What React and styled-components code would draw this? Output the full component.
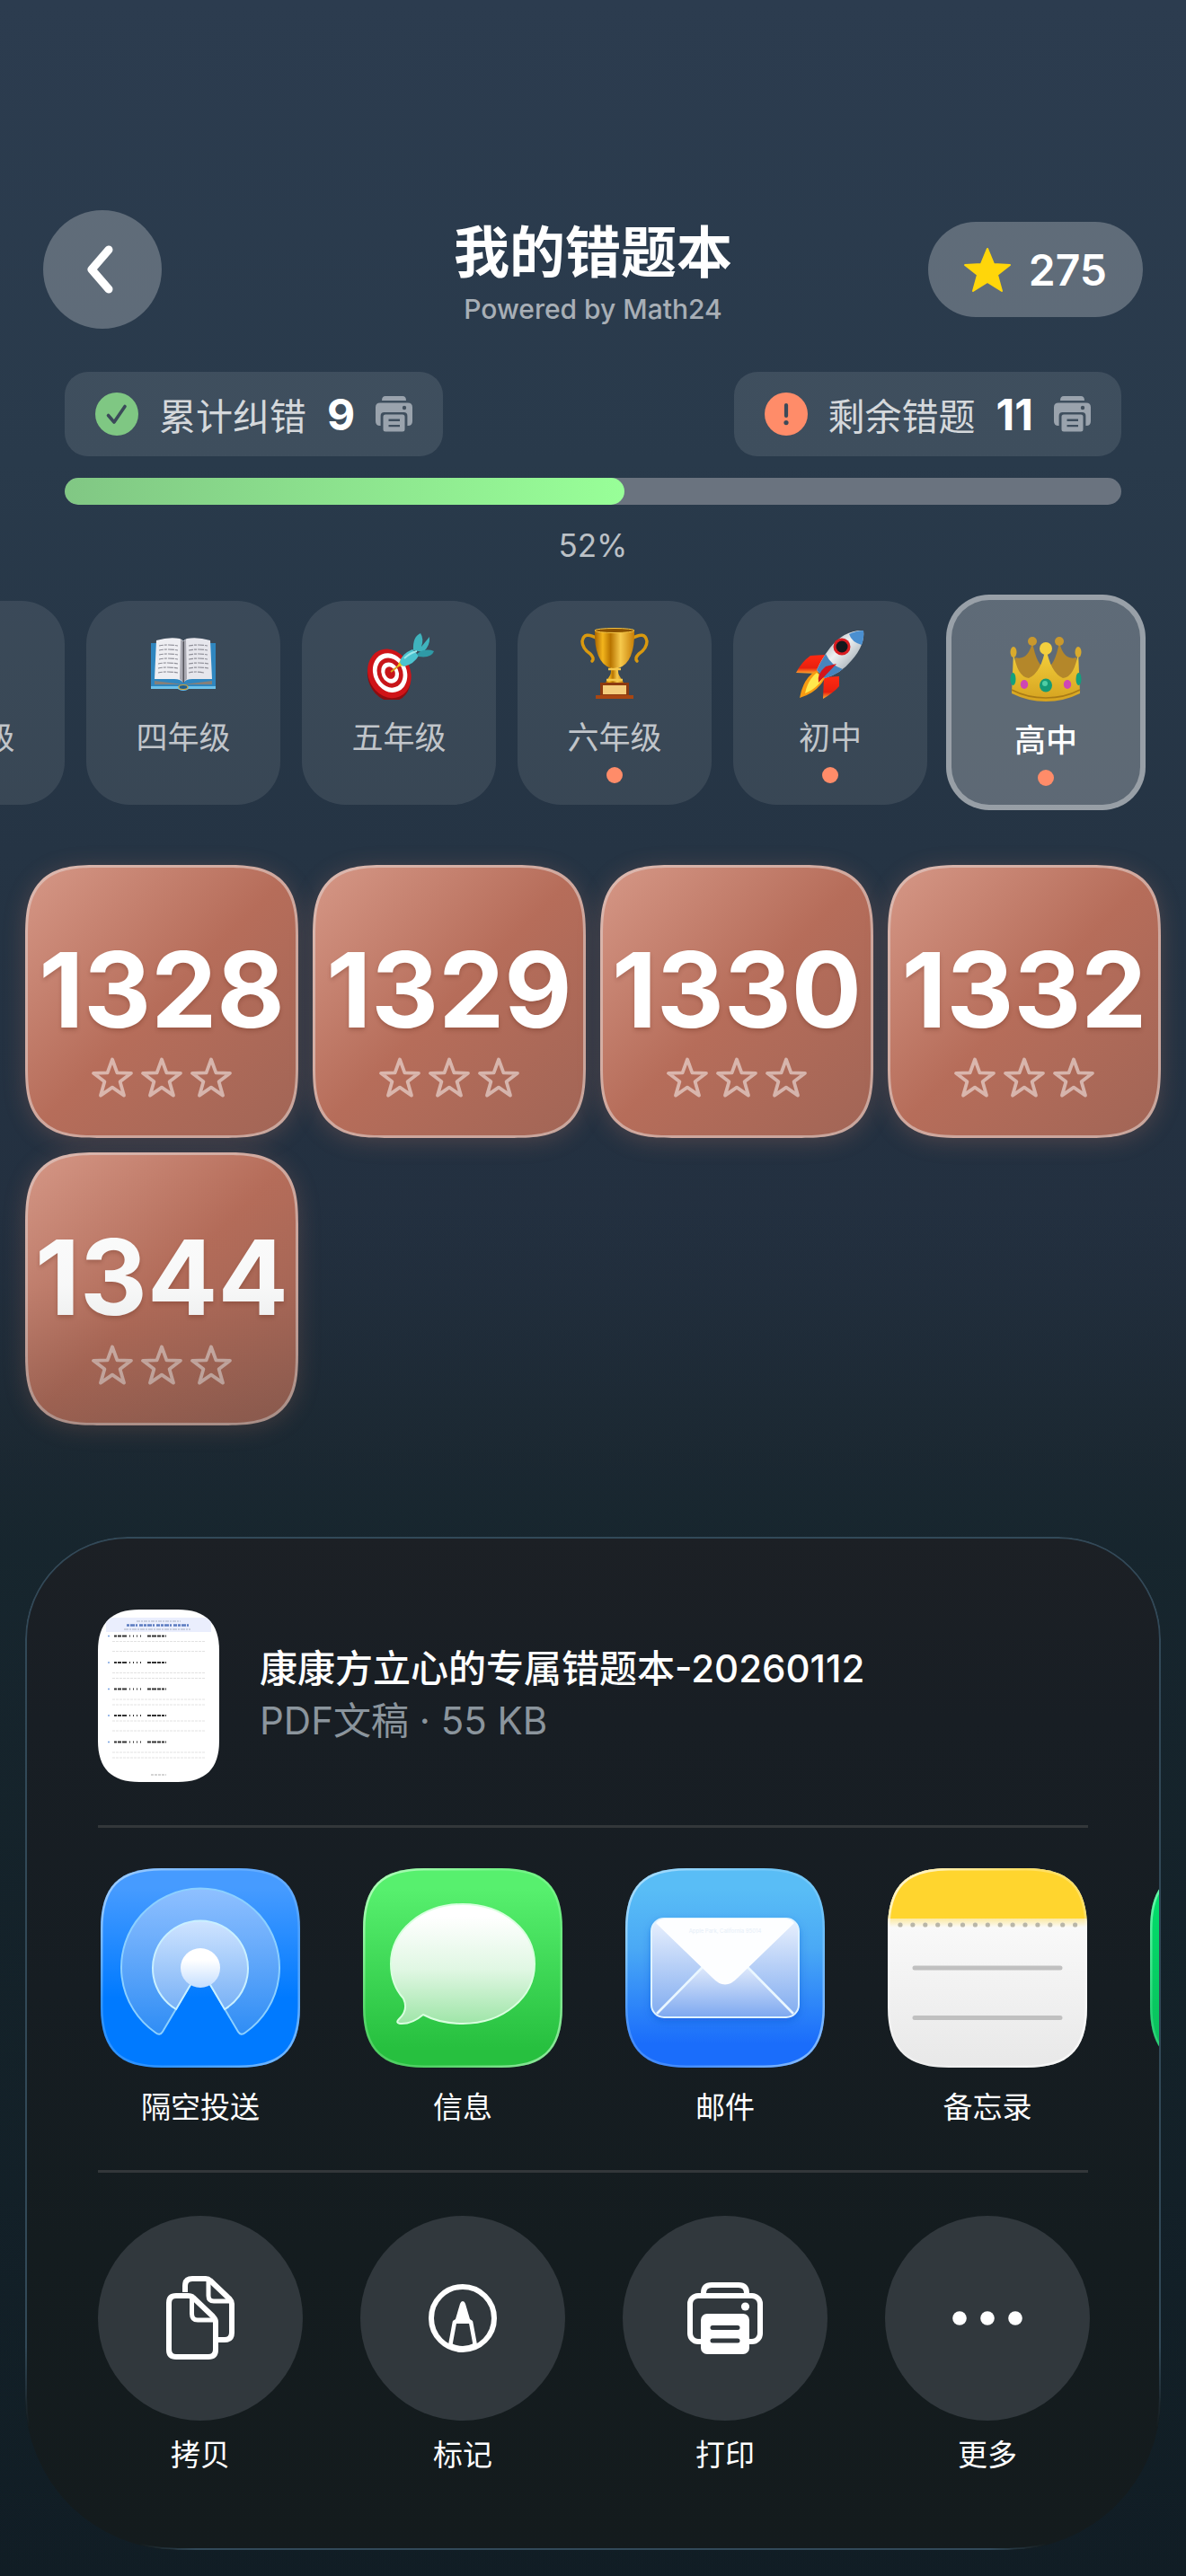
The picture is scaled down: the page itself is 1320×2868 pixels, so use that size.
import React from "react";
import styled, { createGlobalStyle, css } from "styled-components";

const GlobalStyle = createGlobalStyle`
  *, *::before, *::after { box-sizing: border-box; }
  body {
    margin: 0;
    background: #111d25;
    font-family: Inter, "Noto Sans CJK SC", sans-serif;
    color: #fff;
  }
  button {
    margin: 0;
    padding: 0;
    border: 0;
    background: none;
    color: inherit;
    font: inherit;
    cursor: pointer;
  }
  h1, h2, p { margin: 0; }
  svg { display: block; flex: none; }
`;

const Page = styled.div`
  min-height: 100vh;
  display: flex;
  flex-direction: column;
  overflow: hidden;
  background: linear-gradient(
    to bottom,
    #2c3c4f 0%,
    #293a4b 18%,
    #253444 33%,
    #233040 47%,
    #1f2b37 56%,
    #1b2934 60%,
    #17242e 74%,
    #121d27 100%
  );
`;

const Header = styled.header`
  display: grid;
  grid-template-columns: 1fr auto 1fr;
  align-items: center;
  padding: 234px 48px 0;
`;

const BackButton = styled.button`
  width: 132px;
  height: 132px;
  border-radius: 50%;
  display: grid;
  place-items: center;
  background: rgba(255, 255, 255, 0.25);
`;

const Heading = styled.div`
  padding-top: 4px;
  text-align: center;
`;

const Title = styled.h1`
  font-size: 62px;
  line-height: 80px;
  font-weight: 700;
`;

const Tagline = styled.p`
  margin-top: 4px;
  font-size: 30px;
  line-height: 36px;
  font-weight: 500;
  color: rgba(255, 255, 255, 0.6);
`;

const Score = styled.div`
  justify-self: end;
  display: flex;
  align-items: center;
  gap: 20px;
  height: 106px;
  padding: 0 40px;
  border-radius: 53px;
  background: rgba(255, 255, 255, 0.25);
  font-size: 48px;
  font-weight: 600;
`;

const Stats = styled.section`
  display: flex;
  justify-content: space-between;
  padding: 48px 72px 24px;
`;

const StatChip = styled.button`
  display: flex;
  align-items: center;
  gap: 23px;
  height: 94px;
  padding: 0 34px;
  border-radius: 26px;
  background: rgba(255, 255, 255, 0.1);
`;

const StatLabel = styled.span`
  font-size: 41px;
  color: rgba(255, 255, 255, 0.8);
`;

const StatValue = styled.span`
  font-size: 48px;
  font-weight: 700;
`;

const Track = styled.div`
  height: 30px;
  margin: 0 72px;
  border-radius: 15px;
  background: #6a737f;
  overflow: hidden;
`;

const Fill = styled.div`
  height: 100%;
  border-radius: 15px;
  background: linear-gradient(to right, #81c784, #98ff98);
`;

const Percent = styled.p`
  margin: 22px 0 32px;
  font-size: 35px;
  line-height: 46px;
  text-align: center;
  color: rgba(255, 255, 255, 0.7);
`;

const Tabs = styled.nav`
  display: flex;
  justify-content: flex-end;
  align-items: center;
  gap: 24px;
  padding-right: 48px;
  overflow: hidden;
`;

const Tab = styled.button`
  flex: 0 0 216px;
  height: 227px;
  display: flex;
  flex-direction: column;
  align-items: center;
  padding-top: 30px;
  border-radius: 48px;
  background: rgba(255, 255, 255, 0.09);
  color: rgba(255, 255, 255, 0.7);
  font-size: 35px;
  line-height: 44px;
  ${(p) =>
    p.$active &&
    css`
      flex-basis: 222px;
      height: 240px;
      margin: 0 -3px;
      padding-top: 34px;
      border: 6px solid rgba(255, 255, 255, 0.36);
      background: rgba(255, 255, 255, 0.26);
      color: #fff;
      font-weight: 500;
    `}
`;

const TabLabel = styled.span`
  margin: 20px 0 11px;
`;

const Dot = styled.span`
  width: 18px;
  height: 18px;
  border-radius: 50%;
  background: #ff8c69;
`;

const Grid = styled.main`
  display: grid;
  grid-template-columns: repeat(4, 1fr);
  gap: 16px;
  padding: 61px 28px 0;
`;

const Card = styled.button`
  aspect-ratio: 1;
  min-width: 0;
  display: flex;
  flex-direction: column;
  align-items: center;
  gap: 16px;
  padding-top: 78px;
  border: 3px solid rgba(225, 205, 200, 0.62);
  border-radius: 66px;
  background: linear-gradient(135deg, #d69887 0%, #b66d5a 50%, #a16556 100%) border-box;
  box-shadow: 0 4px 26px rgba(214, 128, 106, 0.24);

  @supports (corner-shape: superellipse(1.5)) {
    border-radius: 80px;
    corner-shape: superellipse(1.5);
  }
`;

const CardNumber = styled.span`
  font-size: 116px;
  line-height: 116px;
  font-weight: 700;
  text-shadow: 0 3px 4px rgba(90, 35, 20, 0.25);
`;

const StarRow = styled.span`
  display: flex;
  gap: 7px;
`;

const SheetLayer = styled.div`
  position: relative;
  z-index: 1;
  margin-top: auto;
  display: flex;
  flex-direction: column;
`;

const Sheet = styled.section`
  position: relative;
  margin: 0 28px 29px;
  padding: 81px 81px 84px;
  border-radius: 114px 114px 170px 170px;
  background: linear-gradient(to bottom, #1c2025 0%, #181e24 18%, #161d22 45%, #141c1f 70%, #141b1d 100%);

  &::before {
    content: "";
    position: absolute;
    inset: -440px -28px -29px;
    z-index: -1;
    pointer-events: none;
    background: linear-gradient(
      to bottom,
      rgba(14, 30, 32, 0) 0,
      rgba(14, 30, 32, 0.03) 160px,
      rgba(14, 30, 32, 0.16) 300px,
      rgba(14, 30, 32, 0.3) 440px
    );
  }

  &::after {
    content: "";
    position: absolute;
    inset: 0;
    pointer-events: none;
    border: 2px solid #324958;
    border-radius: inherit;
    mask-image: linear-gradient(to bottom, #000 80%, transparent 88%),
      linear-gradient(to right, transparent 10%, #000 15%, #000 85%, transparent 90%);
  }
`;

const FileRow = styled.div`
  display: flex;
  align-items: center;
  gap: 45px;
`;

const FileName = styled.h2`
  font-size: 42px;
  line-height: 56px;
  font-weight: 500;
`;

const FileMeta = styled.p`
  font-size: 42px;
  line-height: 60px;
  color: #8b959d;
`;

const Divider = styled.hr`
  height: 3px;
  margin: 48px 0;
  border: 0;
  background: #33373a;
`;

const AppRow = styled.div`
  display: flex;
  gap: 64px;
  margin: -3px -81px 0 0;
  overflow: hidden;
`;

const ActionRow = styled.div`
  display: flex;
  gap: 64px;
`;

const ShareItem = styled.button`
  flex: 0 0 228px;
  display: flex;
  flex-direction: column;
  align-items: center;
  gap: ${(p) => p.$gap}px;
  font-size: 33px;
  line-height: 44px;
`;

const ActionDisc = styled.span`
  width: 228px;
  height: 228px;
  border-radius: 50%;
  display: grid;
  place-items: center;
  background: #31383d;
`;

/* ---------- small glyphs ---------- */

const starPoints = "26,2 33,19 51,20 37,31 42,49 26,39 10,49 15,31 1,20 19,19";

const ScoreStar = () => (
  <svg width="52" height="50" viewBox="0 0 52 50" aria-hidden="true">
    <polygon points={starPoints} fill="#ffd60a" stroke="#ffd60a" strokeWidth="2" strokeLinejoin="round" />
  </svg>
);

const OutlineStar = () => (
  <svg width="48" height="47" viewBox="0 0 48 47" aria-hidden="true">
    <path
      d="M24 3.5 29.4 18.3 45 18.8 32.6 28.3 37 43.6 24 34.6 11 43.6 15.4 28.3 3 18.8 18.6 18.3Z"
      fill="none"
      stroke="rgba(255,255,255,.5)"
      strokeWidth="3.8"
      strokeLinejoin="round"
    />
  </svg>
);

const CheckBadge = () => (
  <svg width="48" height="48" viewBox="0 0 48 48" aria-hidden="true">
    <circle cx="24" cy="24" r="24" fill="#7fc783" />
    <path d="M14.5 25.5 21 33 33 15.5" fill="none" stroke="#3b4a59" strokeWidth="3.6" strokeLinecap="round" strokeLinejoin="round" />
  </svg>
);

const AlertBadge = () => (
  <svg width="48" height="48" viewBox="0 0 48 48" aria-hidden="true">
    <circle cx="24" cy="24" r="24" fill="#ff8c69" />
    <path d="M24 14v12" stroke="#3b4a59" strokeWidth="4.2" strokeLinecap="round" />
    <circle cx="24" cy="33.6" r="2.6" fill="#3b4a59" />
  </svg>
);

const SmallPrinter = () => (
  <svg width="41" height="40" viewBox="0 0 41 40" aria-hidden="true">
    <g fill="#9aa3ad">
      <path d="M11 0h19q4 0 4 5H7q0-5 4-5Z" />
      <path d="M5 7.5h31q5 0 5 5V28q0 5-5 5h-.6V22q0-4-4-4H9.6q-4 0-4 4v11H5q-5 0-5-5V12.5q0-5 5-5Z" />
      <path fillRule="evenodd" d="M11 20.5h19q2.500 0 2.500 2.500v14q0 2.500-2.500 2.500H11q-2.500 0-2.500-2.500V23q0-2.500 2.500-2.500ZM14.500 25.500v2.400h12.500v-2.400Zm0 6.400v2.400h12.500v-2.400Z" />
    </g>
    <circle cx="32" cy="13" r="2.2" fill="#404e5c" />
  </svg>
);

/* ---------- grade pictures ---------- */

const Book = () => (
  <svg width="80" height="80" viewBox="0 0 80 80" aria-hidden="true">
    <path d="M4 17h72v51H46q-6 4-12 0H4Z" fill="#2f86bf" />
    <path d="M4 65h72v3H46q-6 4-12 0H4Z" fill="#6cc1ea" />
    <path d="M8 59 40 63 72 59v4H8Z" fill="#85807a" />
    <path d="M10 14q14-4 26-2 3 1 4 3v46q-3-4-10-4H8Z" fill="#eeeef2" />
    <path d="M70 14q-14-4-26-2-3 1-4 3v46q3-4 10-4h22Z" fill="#e6e6ec" />
    <path d="M37 13q3 1 3 4v44l-4-4ZM43 13q-3 1-3 4v44l4-4Z" fill="#a9a9b2" />
    <path d="M39.5 15h1.5v46h-1.500Z" fill="#55555c" />
    <path
      d="M13 20q10-2 21 0M13 25q10-2 21 0M13 30q10-2 21 0M13 35q10-2 21 0M12 40q10-2 22 0M12 45q10-2 22 0M12 50q10-2 22 0M46 20q11-2 21 0M46 25q11-2 21 0M46 30q11-2 21 0M46 35q11-2 21 0M46 40q11-2 22 0M46 45q11-2 22 0M46 50q8-2 17 0"
      stroke="#8f8f98"
      strokeWidth="1.2"
      strokeDasharray="5 1 3 1 7 1"
      fill="none"
    />
    <ellipse cx="40" cy="66" rx="5" ry="2.500" fill="#1d5f92" stroke="#cda43b" strokeWidth="1.2" />
  </svg>
);

const Target = () => (
  <svg width="80" height="80" viewBox="0 0 80 80" aria-hidden="true">
    <g transform="rotate(-24 29 50)">
      <ellipse cx="27" cy="54" rx="23" ry="28" fill="#8e0d10" />
      <ellipse cx="29" cy="51" rx="23.5" ry="28" fill="#cf1418" />
      <ellipse cx="30" cy="50.500" rx="18.500" ry="22.500" fill="#fff" />
      <ellipse cx="30" cy="50.500" rx="14" ry="17" fill="#c81519" />
      <ellipse cx="30" cy="50.500" rx="9.500" ry="12" fill="#fff" />
      <ellipse cx="30" cy="50.500" rx="5.500" ry="7" fill="#c81519" />
    </g>
    <path d="M31 49 44 39" stroke="#d8a51c" strokeWidth="1.8" />
    <path d="M38 43 42 35 49 42Z" fill="#f0c419" />
    <path d="M41 38q2-9 14-14l7 7q-5 9-16 12-4-1-5-5Z" fill="#4cc3cf" />
    <path d="M56 25Q55 10 64 6q4 6 1 15l9-11q1 10-7 17Z" fill="#3fb3bd" />
    <path d="M60 29q9-7 19-3-3 8-17 6Z" fill="#2f9aa6" />
    <path d="M46 34q6-6 14-8" stroke="#9be9ec" strokeWidth="2" fill="none" />
  </svg>
);

const Trophy = () => (
  <svg width="80" height="80" viewBox="0 0 80 80" aria-hidden="true">
    <defs>
      <linearGradient id="cup" x1="0" x2="1">
        <stop offset="0" stopColor="#a96400" />
        <stop offset=".2" stopColor="#f3b51c" />
        <stop offset=".4" stopColor="#b87400" />
        <stop offset=".65" stopColor="#f6c94c" />
        <stop offset="1" stopColor="#c67d06" />
      </linearGradient>
    </defs>
    <path d="M21 12Q6 3 4 15q0 8 9 14 5 5 2 8M59 12q15-9 17 3 0 8-9 14-5 5-2 8" fill="none" stroke="#d9990f" strokeWidth="3.500" strokeLinecap="round" />
    <path d="M18 2h44q1 37-18 43h-8Q17 39 18 2Z" fill="url(#cup)" />
    <ellipse cx="40" cy="3" rx="22" ry="2.500" fill="#8a5200" stroke="#f3c445" />
    <path d="M36 44h8q-1 7 3 12l3 5H30l3-5q4-5 3-12Z" fill="url(#cup)" />
    <path d="M33 46h14M31 58h18" stroke="#f5c84c" strokeWidth="2.500" />
    <path d="M24 61h32v14h5v4H19v-4h5Z" fill="#8c3a10" />
    <path d="M27 64h26v10H27Z" fill="#f4cd7c" />
    <path d="M19 75h42v4H19Z" fill="#a84612" />
  </svg>
);

const Rocket = () => (
  <svg width="80" height="80" viewBox="0 0 80 80" aria-hidden="true">
    <defs>
      <linearGradient id="hull" x1="0" y1="0" x2="1" y2="1">
        <stop offset="0" stopColor="#7c8791" />
        <stop offset=".45" stopColor="#eef1f2" />
        <stop offset="1" stopColor="#71808c" />
      </linearGradient>
      <linearGradient id="fin" x1="0" y1="0" x2="0" y2="1">
        <stop offset="0" stopColor="#ff2a12" />
        <stop offset=".7" stopColor="#e8200e" />
        <stop offset="1" stopColor="#ffb02e" />
      </linearGradient>
    </defs>
    <path d="M34 30 18 31Q8 38 2 50l24 1Z" fill="url(#fin)" />
    <path d="M50 54v11q-6 7-18 14l1-24Z" fill="url(#fin)" />
    <path d="M24 48Q10 56 6 78q20-6 28-22Z" fill="#f79b12" />
    <path d="M25 50Q15 58 12 73q14-6 20-17Z" fill="#ffe94d" />
    <path d="M77 3Q56 2 40 22 30 35 25 47l9 9q18-5 30-20Q79 19 77 3Z" fill="url(#hull)" />
    <path d="M77 3q-8 0-16 4 3 9 14 12 3-8 2-16Z" fill="#4a8fd0" />
    <path d="M35 29q-6 9-10 18l9 9q11-3 20-10Q41 42 35 29Z" fill="#4784bd" />
    <circle cx="53" cy="21" r="9.500" fill="#d91c20" />
    <circle cx="53" cy="21" r="6.500" fill="#15181c" />
    <path d="M47 40 27 61q-2-10 8-18Z" fill="#d4161b" />
  </svg>
);

const Crown = () => (
  <svg width="80" height="80" viewBox="0 0 80 80" aria-hidden="true">
    <defs>
      <linearGradient id="gold" x1="0" y1="0" x2="0" y2="1">
        <stop offset="0" stopColor="#f6d33e" />
        <stop offset="1" stopColor="#d5a21f" />
      </linearGradient>
    </defs>
    <path d="M6 30Q20 34 25 13 30 40 40 42 50 40 55 13 60 34 74 30V62H6Z" fill="#b4872a" />
    <circle cx="25" cy="12" r="5" fill="#c9982d" />
    <circle cx="55" cy="12" r="5" fill="#c9982d" />
    <path d="M4 24Q8 52 21 53 35 47 40 18 45 47 59 53 72 52 76 24L78 70Q60 79 40 79T2 70Z" fill="url(#gold)" />
    <ellipse cx="4" cy="24" rx="3.500" ry="6" fill="#d9aa2d" />
    <ellipse cx="76" cy="24" rx="3.500" ry="6" fill="#d9aa2d" />
    <circle cx="40" cy="20" r="7" fill="#f3cf3d" />
    <path d="M2 66q17 9 38 9t38-9" stroke="#a97b16" strokeWidth="1.6" fill="none" />
    <ellipse cx="40" cy="61" rx="7" ry="7.500" fill="#159a76" />
    <ellipse cx="39" cy="59" rx="3" ry="3" fill="#4fcea5" />
    <ellipse cx="16" cy="60" rx="4.200" ry="5" fill="#cf46b4" />
    <ellipse cx="64" cy="60" rx="4.200" ry="5" fill="#cf46b4" />
    <ellipse cx="3.500" cy="54" rx="3" ry="7" fill="#14a07c" />
    <ellipse cx="76.500" cy="54" rx="3" ry="7" fill="#14a07c" />
  </svg>
);

/* ---------- share target icons ---------- */

const roundTile = "M68 0H154C202 0 222 20 222 68V154C222 202 202 222 154 222H68C20 222 0 202 0 154V68C0 20 20 0 68 0Z";

const Tile = ({ id, stops, rim, children }) => (
  <svg width="222" height="222" viewBox="0 0 222 222" aria-hidden="true">
    <defs>
      <linearGradient id={`${id}-bg`} x1="0" y1="0" x2="0" y2="1">
        {stops.map(([offset, color]) => (
          <stop key={offset} offset={offset} stopColor={color} />
        ))}
      </linearGradient>
      <linearGradient id={`${id}-rim`} x1="0" y1="0" x2="1" y2="1">
        <stop offset="0" stopColor={rim} stopOpacity=".85" />
        <stop offset=".35" stopColor={rim} stopOpacity=".25" />
        <stop offset=".65" stopColor={rim} stopOpacity=".25" />
        <stop offset="1" stopColor={rim} stopOpacity=".7" />
      </linearGradient>
      <clipPath id={`${id}-clip`}>
        <path d={roundTile} />
      </clipPath>
    </defs>
    <g clipPath={`url(#${id}-clip)`}>
      <rect width="222" height="222" fill={`url(#${id}-bg)`} />
      {children}
      <path d={roundTile} fill="none" stroke={`url(#${id}-rim)`} strokeWidth="5" />
    </g>
  </svg>
);

const AirDropIcon = () => (
  <Tile id="airdrop" rim="#b8dcff" stops={[[0.1, "#469bff"], [0.65, "#007aff"], [1, "#007aff"]]}>
    <defs>
      <linearGradient id="ringA" x1="0" y1="0" x2="0" y2="1">
        <stop offset="0" stopColor="#8fc0ff" />
        <stop offset="1" stopColor="#2f8df5" />
      </linearGradient>
      <linearGradient id="ringB" x1="0" y1="0" x2="0" y2="1">
        <stop offset="0" stopColor="#cfe4ff" />
        <stop offset="1" stopColor="#78b1f6" />
      </linearGradient>
      <linearGradient id="ringC" x1="0" y1="0" x2="0" y2="1">
        <stop offset=".3" stopColor="#fff" />
        <stop offset="1" stopColor="#c4deff" />
      </linearGradient>
    </defs>
    <path d="M111 111 69 182Q66 187 61 183A88 88 0 1 1 161 183Q156 187 153 182Z" fill="url(#ringA)" stroke="#8cd0ff" strokeWidth="2" />
    <path d="M111 111 84 157A53 53 0 1 1 138 157Z" fill="url(#ringB)" stroke="#c9f0ff" strokeWidth="2" />
    <circle cx="111" cy="111" r="22" fill="url(#ringC)" />
  </Tile>
);

const MessagesIcon = () => (
  <Tile id="messages" rim="#c9ffd0" stops={[[0.1, "#57f06e"], [0.9, "#27c03f"], [1, "#27c03f"]]}>
    <defs>
      <linearGradient id="bubble" x1="0" y1="0" x2="0" y2="1">
        <stop offset=".1" stopColor="#fff" />
        <stop offset=".55" stopColor="#e0f7e3" />
        <stop offset="1" stopColor="#9fe5a8" />
      </linearGradient>
    </defs>
    <path
      d="M111 40C156 40 191 69 191 106.500S156 173 111 173C94 173 80 170 67 163Q54 174 41 173 36 172 40 168 51 158 45 145C36 135 31 122 31 106.500 31 69 66 40 111 40Z"
      fill="url(#bubble)"
      stroke="#d9ffdf"
      strokeWidth="2"
    />
  </Tile>
);

const MailIcon = () => (
  <Tile id="mail" rim="#bfe6ff" stops={[[0.1, "#59bdf6"], [0.4, "#4aa9f5"], [0.88, "#1a6dfb"], [1, "#1a6dfb"]]}>
    <defs>
      <linearGradient id="paper" x1="0" y1="0" x2="0" y2="1">
        <stop offset="0" stopColor="#eaf1fd" />
        <stop offset="1" stopColor="#7fabf0" />
      </linearGradient>
      <linearGradient id="pocket" x1="0" y1="0" x2="0" y2="1">
        <stop offset="0" stopColor="#dfe9fb" />
        <stop offset="1" stopColor="#7da8f0" />
      </linearGradient>
      <filter id="mailShade" x="-20%" y="-20%" width="140%" height="150%">
        <feDropShadow dx="0" dy="4" stdDeviation="5" floodColor="#0a4fd0" floodOpacity=".5" />
      </filter>
    </defs>
    <rect x="29" y="56" width="164" height="110" rx="14" fill="url(#paper)" filter="url(#mailShade)" />
    <path d="M34 163 86 110H136L188 163Q184 166 178 166H44Q38 166 34 163Z" fill="url(#pocket)" />
    <path d="M35 162 86 110M187 162 136 110" stroke="#eaf7ff" strokeWidth="2.600" />
    <rect x="29" y="56" width="164" height="110" rx="14" fill="none" stroke="#dff3ff" strokeWidth="2" />
    <path d="M34 61Q38 56 45 56H177Q184 56 188 61L125 122Q111 137 97 122Z" fill="#fdfeff" />
    <text x="111" y="72" textAnchor="middle" fontSize="6" fontFamily="Inter, sans-serif" fill="#e6eef8">
      Apple Park, California 95014
    </text>
  </Tile>
);

const NotesIcon = () => (
  <Tile id="notes" rim="#ffffff" stops={[[0.25, "#fafafa"], [1, "#e8e8e8"]]}>
    <defs>
      <linearGradient id="binding" x1="0" y1="0" x2="0" y2="1">
        <stop offset="0" stopColor="#fce9a0" />
        <stop offset="1" stopColor="#fafafa" />
      </linearGradient>
    </defs>
    <rect y="56" width="222" height="10" fill="url(#binding)" />
    <rect width="222" height="56" fill="#ffd52e" />
    {Array.from({ length: 15 }, (_, i) => (
      <circle key={i} cx={14 + i * 13.9} cy="63" r="2.600" fill="#b9b6a8" />
    ))}
    <path d="M30 111H192M30 166.500H192" stroke="#c0c0c0" strokeWidth="5" strokeLinecap="round" />
  </Tile>
);

const GreenIcon = () => (
  <Tile id="green" rim="#8dffc0" stops={[[0.1, "#00e06c"], [0.9, "#0bbf5c"]]} />
);

/* ---------- action icons ---------- */

const CopyIcon = () => (
  <svg width="78" height="96" viewBox="0 0 78 96" fill="none" stroke="#fff" strokeWidth="6" strokeLinejoin="round" aria-hidden="true">
    <path d="M22 19V12Q22 4 30 4H45Q48 4 50 6L72 27Q74 29 74 32V64Q74 72 66 72H58" />
    <path d="M48 6V23Q48 29 54 29H73" strokeWidth="5" />
    <path d="M12 23H25Q29 23 31 25L53 46Q56 49 56 52V83Q56 91 48 91H12Q4 91 4 83V31Q4 23 12 23Z" />
    <path d="M29.500 25V43Q29.500 50 36 50H55" strokeWidth="5" />
  </svg>
);

const MarkupIcon = () => (
  <svg width="76" height="76" viewBox="0 0 76 76" fill="none" stroke="#fff" aria-hidden="true">
    <circle cx="38" cy="38" r="35" strokeWidth="6" />
    <path d="M38 19Q36 19 35 22L30 39 27 41V44H49V41L46 39 41 22Q40 19 38 19Z" fill="#fff" stroke="none" />
    <path d="M29 42 24 69M47 42 52 69" strokeWidth="4.500" />
    <path d="M24 68Q38 75 52 68" strokeWidth="5" />
  </svg>
);

const PrintIcon = () => (
  <svg width="84" height="80" viewBox="0 0 84 80" fill="none" aria-hidden="true">
    <path d="M18 15V12Q18 3 27 3H57Q66 3 66 12V15" stroke="#fff" strokeWidth="6" />
    <rect x="3" y="15" width="78" height="51" rx="9" stroke="#fff" strokeWidth="6" />
    <rect x="15" y="35" width="54" height="45" rx="7" fill="#fff" />
    <path d="M28 50.500H56M28 65H56" stroke="#31383d" strokeWidth="5" strokeLinecap="round" />
    <circle cx="64.500" cy="27" r="4.600" fill="#fff" />
  </svg>
);

const MoreIcon = () => (
  <svg width="78" height="16" viewBox="0 0 78 16" fill="#fff" aria-hidden="true">
    <circle cx="8" cy="8" r="7.800" />
    <circle cx="39" cy="8" r="7.800" />
    <circle cx="70" cy="8" r="7.800" />
  </svg>
);

const DocumentPreview = () => (
  <svg width="135" height="192" viewBox="0 0 135 192" aria-hidden="true">
    <defs>
      <clipPath id="doc">
        <path d="M46 0H89C120 0 135 15 135 46V146C135 177 120 192 89 192H46C15 192 0 177 0 146V46C0 15 15 0 46 0Z" />
      </clipPath>
    </defs>
    <g clipPath="url(#doc)" fill="none">
      <rect width="135" height="192" fill="#fff" />
      <rect x="9" y="9" width="117" height="16" fill="#eaeefd" />
      <path d="M43 13H92" stroke="#a7afc2" strokeWidth="1.2" strokeDasharray="4 1 2 1" />
      <path d="M32 17.500H103" stroke="#5b7bc0" strokeWidth="2.4" strokeDasharray="3 1 5 1 2 2 4 1" />
      <path d="M29 22H103" stroke="#a7afc2" strokeWidth="1.2" strokeDasharray="5 1 2 1" />
      {[29.5, 59, 88.5, 118, 147.5].map((y, i) => (
        <g key={y}>
          <path d={`M11 ${y}h2`} stroke="#7aa3e0" strokeWidth="1.6" />
          <path d={`M18 ${y}h58`} stroke="#333" strokeWidth="2" strokeDasharray="3 1 4 1 5 3 1 3 1 3 1 3 1 7 4 1 5 1 4 1" />
          <path
            d={`M16 ${y + (i % 3 === 0 ? 6 : 11.5)}h103M16 ${y + (i % 3 === 0 ? 17 : 17.5)}h103`}
            stroke="#e2e2e2"
            strokeWidth="1"
            strokeDasharray="3 1"
          />
        </g>
      ))}
      <path d="M59 184H76" stroke="#aaa" strokeWidth="1.2" strokeDasharray="3 1" />
    </g>
  </svg>
);

/* ---------- data ---------- */

const grades = [
  { name: "三年级", Picture: Book },
  { name: "四年级", Picture: Book },
  { name: "五年级", Picture: Target },
  { name: "六年级", Picture: Trophy, pending: true },
  { name: "初中", Picture: Rocket, pending: true },
  { name: "高中", Picture: Crown, pending: true, active: true },
];

const problems = [1328, 1329, 1330, 1332, 1344];

const apps = [
  { name: "隔空投送", Icon: AirDropIcon },
  { name: "信息", Icon: MessagesIcon },
  { name: "邮件", Icon: MailIcon },
  { name: "备忘录", Icon: NotesIcon },
  { name: "", label: "更多应用", Icon: GreenIcon },
];

const actions = [
  { name: "拷贝", Icon: CopyIcon },
  { name: "标记", Icon: MarkupIcon },
  { name: "打印", Icon: PrintIcon },
  { name: "更多", Icon: MoreIcon },
];

const progress = 53;

export default function App() {
  return (
    <Page>
      <GlobalStyle />
      <Header>
        <BackButton aria-label="返回">
          <svg width="34" height="54" viewBox="0 0 34 54" fill="none" aria-hidden="true">
            <path d="M24 5 5 27 24 49" stroke="#fff" strokeWidth="9" strokeLinecap="round" strokeLinejoin="round" />
          </svg>
        </BackButton>
        <Heading>
          <Title>我的错题本</Title>
          <Tagline>Powered by Math24</Tagline>
        </Heading>
        <Score>
          <ScoreStar />
          275
        </Score>
      </Header>

      <Stats>
        <StatChip>
          <CheckBadge />
          <StatLabel>累计纠错</StatLabel>
          <StatValue>9</StatValue>
          <SmallPrinter />
        </StatChip>
        <StatChip>
          <AlertBadge />
          <StatLabel>剩余错题</StatLabel>
          <StatValue>11</StatValue>
          <SmallPrinter />
        </StatChip>
      </Stats>
      <Track role="progressbar" aria-label="进度" aria-valuenow={progress} aria-valuemin={0} aria-valuemax={100}>
        <Fill style={{ width: `${progress}%` }} />
      </Track>
      <Percent>52%</Percent>

      <Tabs>
        {grades.map(({ name, Picture, pending, active }) => (
          <Tab key={name} $active={active}>
            <Picture />
            <TabLabel>{name}</TabLabel>
            {pending && <Dot />}
          </Tab>
        ))}
      </Tabs>

      <Grid>
        {problems.map((id) => (
          <Card key={id}>
            <CardNumber>{id}</CardNumber>
            <StarRow>
              <OutlineStar />
              <OutlineStar />
              <OutlineStar />
            </StarRow>
          </Card>
        ))}
      </Grid>

      <SheetLayer>
        <Sheet>
          <FileRow>
            <DocumentPreview />
            <div>
              <FileName>康康方立心的专属错题本-20260112</FileName>
              <FileMeta>PDF文稿 · 55 KB</FileMeta>
            </div>
          </FileRow>
          <Divider />
          <AppRow>
            {apps.map(({ name, label, Icon }) => (
              <ShareItem key={name || label} $gap={22} aria-label={name || label}>
                <Icon />
                <span>{name}</span>
              </ShareItem>
            ))}
          </AppRow>
          <Divider />
          <ActionRow>
            {actions.map(({ name, Icon }) => (
              <ShareItem key={name} $gap={16}>
                <ActionDisc>
                  <Icon />
                </ActionDisc>
                <span>{name}</span>
              </ShareItem>
            ))}
          </ActionRow>
        </Sheet>
      </SheetLayer>
    </Page>
  );
}
